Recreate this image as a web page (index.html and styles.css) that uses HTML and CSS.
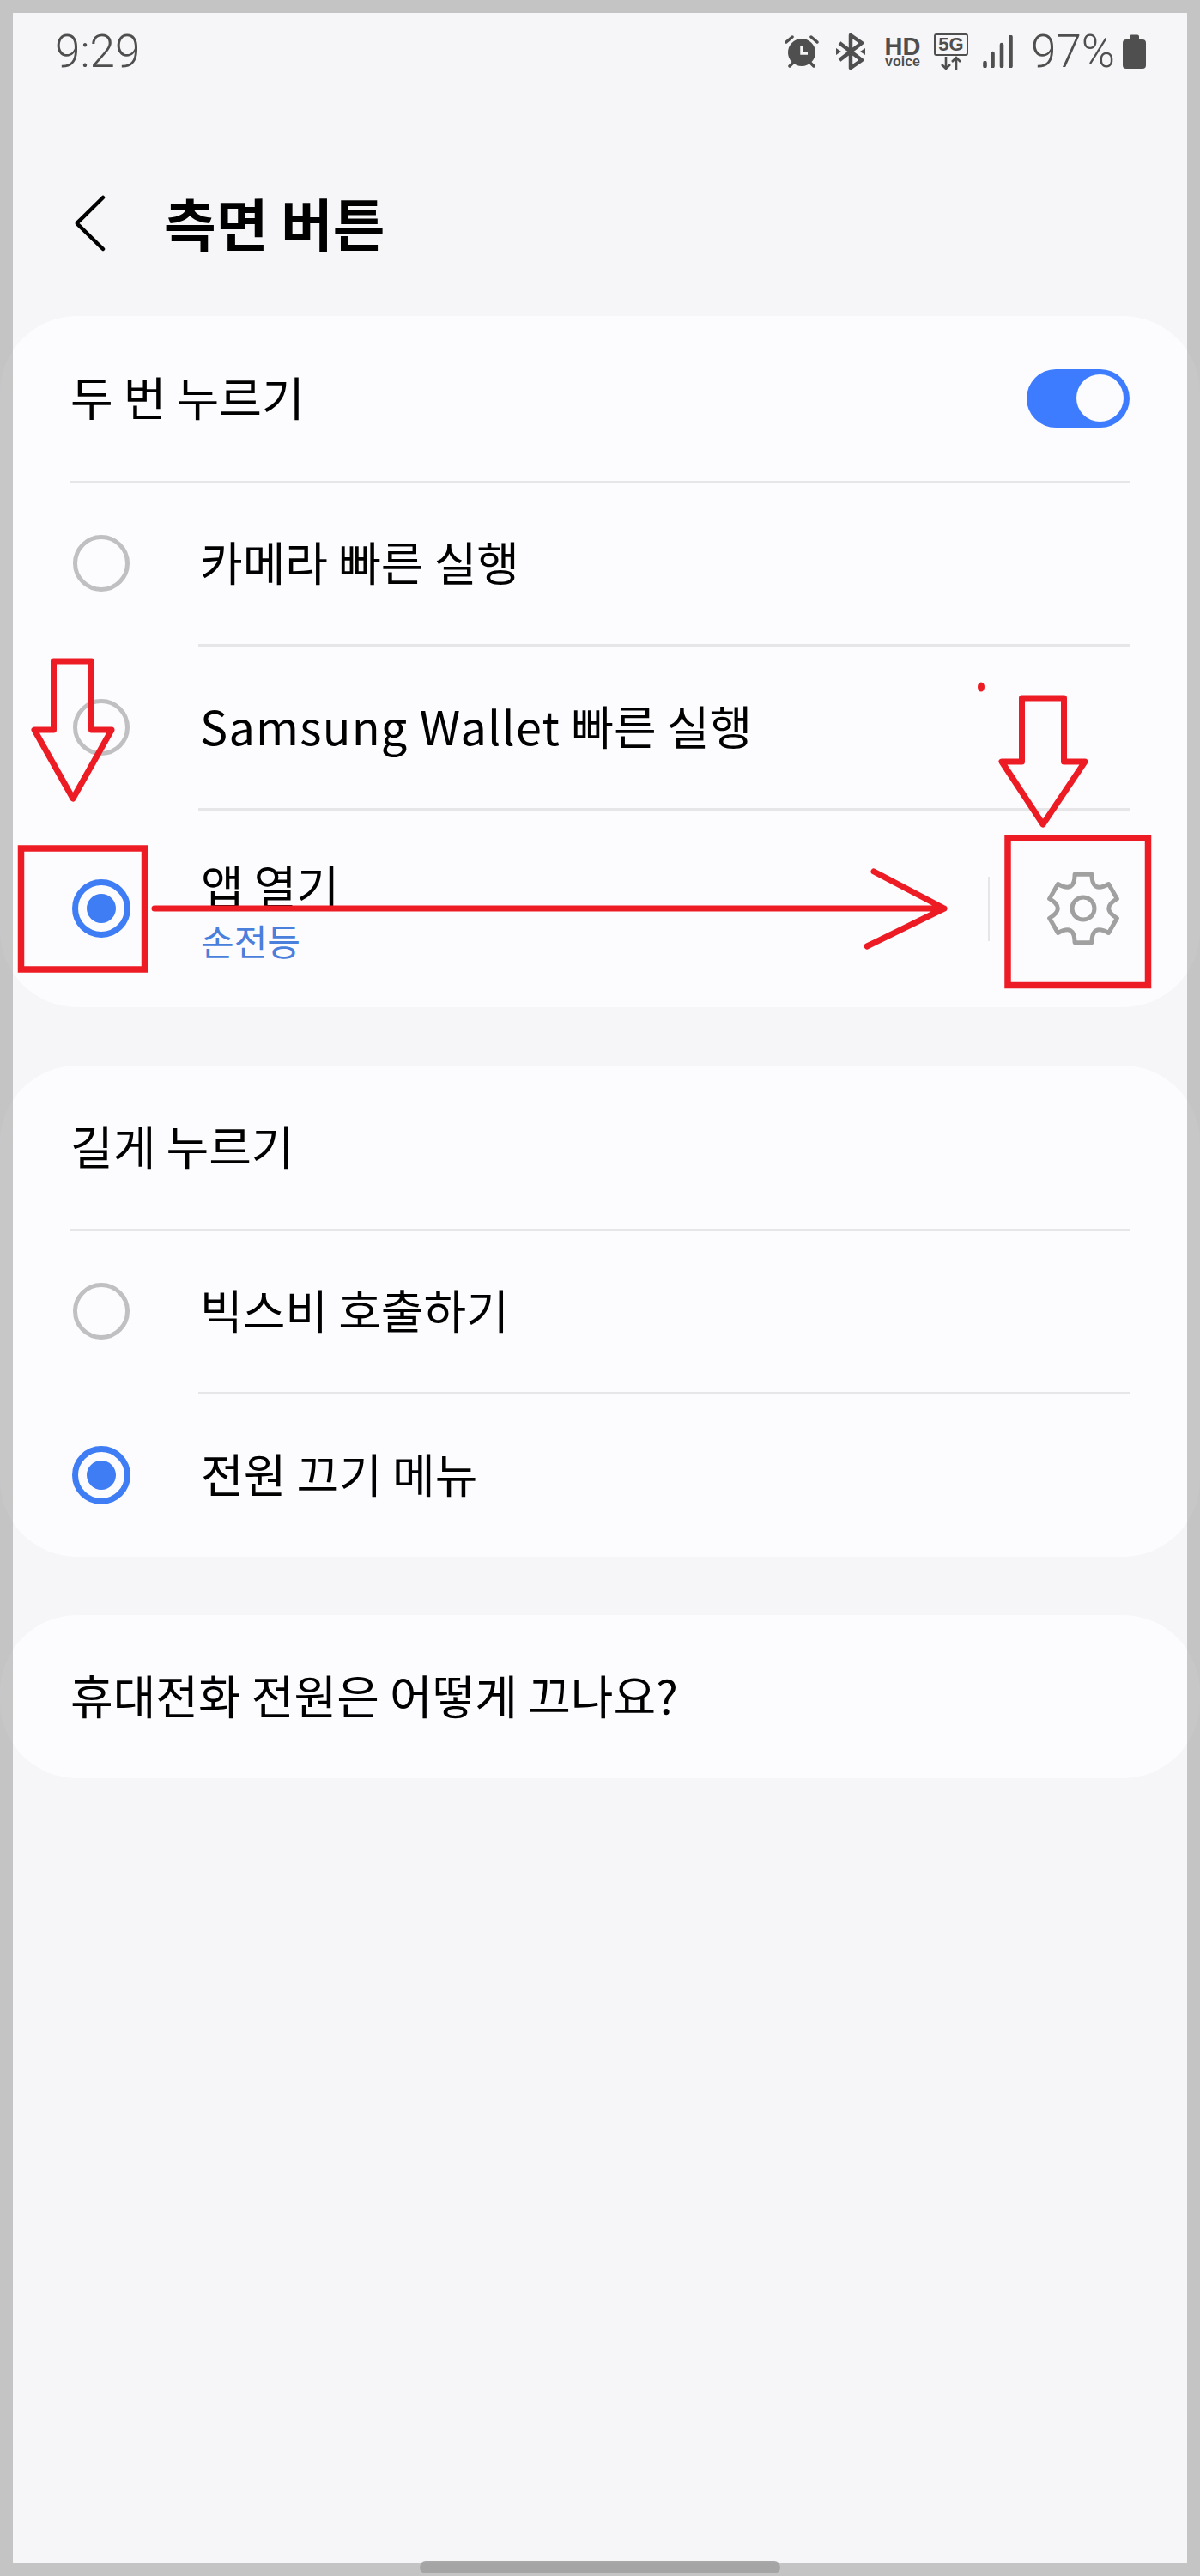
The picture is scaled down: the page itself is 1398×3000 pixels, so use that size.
FILE: index.html
```html
<!DOCTYPE html>
<html lang="ko">
<head>
  <meta charset="UTF-8">
  <meta name="viewport" content="width=device-width, initial-scale=1.0">
  <title>측면 버튼</title>
  <link rel="stylesheet" href="styles.css">
</head>
<body>

<div class="screen">
  <div class="status-bar">
    <span class="time">9:29</span>
    <div class="status-icons">
      <svg class="ic-alarm" width="40" height="40" viewBox="0 0 40 40">
        <circle cx="20" cy="21" r="16" fill="#4f4f4f"/>
        <path d="M20 13v9h7" fill="none" stroke="#f6f6f8" stroke-width="3.5"/>
        <path d="M2 9l7-6M38 9l-7-6M6 37l4-4M34 37l-4-4" fill="none" stroke="#4f4f4f" stroke-width="3.5" stroke-linecap="round"/>
      </svg>
      <svg class="ic-bt" width="36" height="42" viewBox="0 0 36 42">
        <path d="M5 11l26 20-13 9V2l13 9L5 31" fill="none" stroke="#4f4f4f" stroke-width="4.5" stroke-linejoin="round"/>
        <path d="M1 17l6 4-6 4zM35 17l-6 4 6 4z" fill="#4f4f4f"/>
      </svg>
      <div class="hd-voice">
        <span class="hd">HD</span>
        <span class="voice">voice</span>
      </div>
      <div class="net">
        <span class="net-box">5G</span>
        <svg width="26" height="17" viewBox="0 0 26 17">
          <path d="M7 1v14M2 10l5 5 5-5M19 16V2M14 7l5-5 5 5" fill="none" stroke="#4f4f4f" stroke-width="2.6"/>
        </svg>
      </div>
      <svg class="ic-signal" width="35" height="38" viewBox="0 0 35 38">
        <path d="M2.5 32v4M11.5 21v15M22 11v25M32.5 2v34" fill="none" stroke="#4f4f4f" stroke-width="4.6" stroke-linecap="round"/>
      </svg>
      <span class="battery-pct">97%</span>
      <svg class="ic-battery" width="27" height="40" viewBox="0 0 27 40">
        <path d="M8 6V2.500a2 2 0 0 1 2-2h7a2 2 0 0 1 2 2V6h4a4 4 0 0 1 4 4v26a4 4 0 0 1-4 4H4a4 4 0 0 1-4-4V10a4 4 0 0 1 4-4z" fill="#4f4f4f"/>
      </svg>
    </div>
  </div>

  <div class="header">
    <svg class="back" width="40" height="68" viewBox="0 0 40 68">
      <path d="M35 4L5 33.500a1 1 0 0 0 0 1L35 64" fill="none" stroke="#000" stroke-width="4.500" stroke-linecap="round"/>
    </svg>
    <h1 class="title">측면 버튼</h1>
  </div>

  <div class="card">
    <div class="row row-head row-first">
      <span class="label">두 번 누르기</span>
      <span class="toggle"><span class="knob"></span></span>
    </div>
    <div class="divider"></div>
    <div class="row row-radio">
      <span class="radio"></span>
      <span class="label">카메라 빠른 실행</span>
    </div>
    <div class="divider inset"></div>
    <div class="row row-radio">
      <span class="radio"></span>
      <span class="label"><span class="latin">Samsung Wallet</span> 빠른 실행</span>
    </div>
    <div class="divider inset"></div>
    <div class="row row-radio row-tall">
      <span class="radio on"></span>
      <div class="label-group">
        <span class="label">앱 열기</span>
        <span class="sublabel">손전등</span>
      </div>
      <span class="v-line"></span>
      <svg class="gear" width="90" height="90" viewBox="-45 -45 90 90">
        <path d="M-9.900 -39.800L9.900 -39.800Q10 -17.300 29.500 -28.500L39.400 -11.300Q20 0 39.400 11.300L29.500 28.500Q10 17.300 9.900 39.800L-9.900 39.800Q-10 17.300 -29.500 28.500L-39.400 11.300Q-20 0 -39.400 -11.300L-29.500 -28.500Q-10 -17.300 -9.900 -39.800Z" fill="none" stroke="#a0a0a0" stroke-width="5" stroke-linejoin="round"/>
        <circle r="13" fill="none" stroke="#a0a0a0" stroke-width="5"/>
      </svg>
    </div>
  </div>

  <div class="card">
    <div class="row row-head">
      <span class="label">길게 누르기</span>
    </div>
    <div class="divider"></div>
    <div class="row row-radio">
      <span class="radio"></span>
      <span class="label">빅스비 호출하기</span>
    </div>
    <div class="divider inset"></div>
    <div class="row row-radio row-last">
      <span class="radio on"></span>
      <span class="label">전원 끄기 메뉴</span>
    </div>
  </div>

  <div class="card">
    <div class="row row-head row-help">
      <span class="label">휴대전화 전원은 어떻게 끄나요?</span>
    </div>
  </div>

  <div class="home-bar"></div>
</div>

<!-- the see-through grey border sits over the phone screen -->
<div class="frame"></div>

<!-- red marks drawn on top of the screenshot -->
<svg class="marks" width="1398" height="3000" viewBox="0 0 1398 3000">
  <g fill="none" stroke="#ed1c24" stroke-width="7" stroke-linejoin="round" stroke-linecap="round">
    <path d="M62.500 770H106.500V850H130L85 930L40 850H62.500Z"/>
    <path d="M1190.500 813H1239.500V887H1264L1215 960L1167 887H1190.500Z"/>
    <path d="M180 1058H1100M1018 1015L1100 1058L1010 1102"/>
  </g>
  <g fill="none" stroke="#ed1c24" stroke-width="7.500">
    <rect x="24.500" y="988" width="144" height="141"/>
    <rect x="1174" y="976" width="163.500" height="171.500"/>
  </g>
  <ellipse cx="1143" cy="800" rx="4" ry="5.500" fill="#ed1c24"/>
</svg>

</body>
</html>
```

FILE: styles.css
```css
body {
  margin: 0;
  background-color: #f6f6f8;
  font-family: "Noto Sans CJK KR", "Noto Sans", sans-serif;
  color: #000;
}

.screen {
  position: relative;
  height: 2985px;
  padding-top: 15px;
  overflow: hidden;
}

.frame {
  position: absolute;
  top: 0;
  left: 0;
  box-sizing: border-box;
  width: 1398px;
  height: 3000px;
  border: 15px solid rgba(163, 163, 163, 0.6);
}

.status-bar {
  display: flex;
  justify-content: space-between;
  align-items: center;
  height: 62px;
  padding: 14px 63px 0 64px;
  color: #4f4f4f;
}

.time {
  font-family: Roboto, sans-serif;
  font-weight: 300;
  font-size: 53px;
  line-height: 62px;
}

.status-icons {
  display: flex;
  align-items: center;
}

.ic-alarm {
  margin-right: 19px;
}

.ic-bt {
  margin-right: 21px;
}

.hd-voice {
  display: flex;
  flex-direction: column;
  align-items: center;
  width: 43px;
  margin-right: 15px;
  font-family: "Liberation Sans", sans-serif;
  font-weight: bold;
  line-height: 1;
}

.hd {
  font-size: 29px;
  height: 24px;
}

.voice {
  font-size: 16px;
}

.net {
  display: flex;
  flex-direction: column;
  align-items: center;
  width: 40px;
  margin-right: 17px;
}

.net-box {
  box-sizing: border-box;
  width: 40px;
  height: 26px;
  border: 2.5px solid #4f4f4f;
  border-radius: 3px;
  font-family: "Liberation Sans", sans-serif;
  font-weight: bold;
  font-size: 22px;
  line-height: 21px;
  text-align: center;
}

.ic-signal {
  margin-right: 21px;
}

.battery-pct {
  font-family: Roboto, sans-serif;
  font-weight: 300;
  font-size: 53px;
  line-height: 62px;
  margin-right: 9px;
}

.header {
  display: flex;
  align-items: center;
  height: 216px;
  padding: 61px 0 0 85px;
}

.back {
  margin-right: 66px;
}

.title {
  margin: 0 0 4px;
  font-size: 66px;
  font-weight: 700;
  line-height: 80px;
  word-spacing: -4px;
}

.card {
  background-color: #fcfcff;
  border-radius: 90px;
  margin-bottom: 68px;
}

.row {
  display: flex;
  align-items: center;
  height: 187.5px;
  padding: 0 82px;
}

.row-head {
  justify-content: space-between;
  height: 189.5px;
}

.row-first {
  height: 191.5px;
}

.row-tall {
  height: 229.5px;
}

.row-last {
  height: 188.5px;
}

.row-help {
  height: 190px;
}

.row-radio {
  padding-left: 85px;
}

.label {
  padding-bottom: 4px;
  font-size: 54px;
  line-height: 70px;
  word-spacing: -3px;
}

.latin {
  letter-spacing: 1.2px;
}

.divider {
  height: 3px;
  margin: 0 82px;
  background-color: #e6e6e8;
}

.divider.inset {
  margin-left: 231px;
}

.toggle {
  display: flex;
  justify-content: flex-end;
  align-items: center;
  box-sizing: border-box;
  width: 120px;
  height: 68px;
  padding-right: 7px;
  border-radius: 34px;
  background-color: #3e7cff;
}

.knob {
  width: 55px;
  height: 55px;
  border-radius: 50%;
  background-color: #fcfcff;
}

.radio {
  position: relative;
  flex: none;
  box-sizing: border-box;
  width: 66px;
  height: 66px;
  margin-right: 82px;
  border: 5px solid #c0c0c2;
  border-radius: 50%;
}

.radio.on {
  width: 68px;
  height: 68px;
  margin: 0 82px 0 -1px;
  border: 7px solid #3f7df5;
}

.radio.on::after {
  content: "";
  position: absolute;
  top: 10px;
  left: 10px;
  width: 34px;
  height: 34px;
  border-radius: 50%;
  background-color: #3f7df5;
}

.label-group {
  display: flex;
  flex-direction: column;
  flex: 1;
}

.label-group .label {
  padding-bottom: 0;
}

.sublabel {
  margin-top: 4px;
  font-size: 42px;
  line-height: 50px;
  color: #4a7fdc;
}

.v-line {
  width: 2px;
  height: 75px;
  margin-right: 64px;
  background-color: #e6e6e8;
}

.gear {
  flex: none;
  margin-right: 9px;
}

.home-bar {
  position: absolute;
  left: 489px;
  bottom: 3px;
  width: 420px;
  height: 14px;
  border-radius: 7px;
  background-color: #a8a8a8;
}

.marks {
  position: absolute;
  top: 0;
  left: 0;
}
```
